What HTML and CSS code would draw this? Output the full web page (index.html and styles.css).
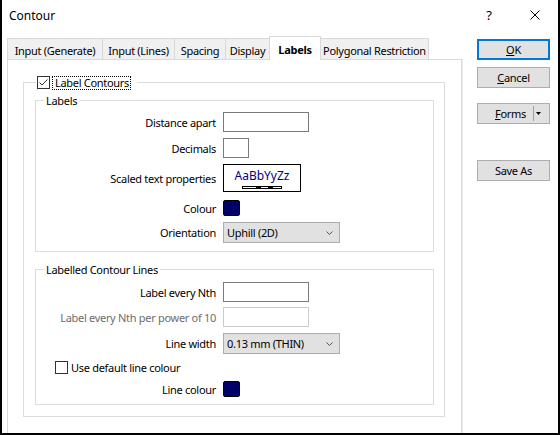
FILE: index.html
```html
<!DOCTYPE html>
<html>
<head>
<meta charset="utf-8">
<link rel="stylesheet" href="styles.css">
</head>
<body>
<div class="window">
  <div class="titlebar">
    <span class="title">Contour</span>
    <span class="capbtn help">?</span>
    <span class="capbtn"><svg width="10" height="10" viewBox="0 0 10 10"><path d="M0.5 0.5L9.5 9.5M9.5 0.5L0.5 9.5" stroke="#000" stroke-width="1" fill="none"/></svg></span>
  </div>
  <div class="main">
    <div class="tabs-area">
      <div class="tabstrip">
        <div class="tab tab-gen">Input (Generate)</div>
        <div class="tab tab-lines">Input (Lines)</div>
        <div class="tab tab-spacing">Spacing</div>
        <div class="tab tab-display">Display</div>
        <div class="tab tab-labels active">Labels</div>
        <div class="tab tab-poly">Polygonal Restriction</div>
      </div>
      <div class="panel">
        <div class="group outer">
          <div class="legend legend-check">
            <span class="checkbox"><svg width="13" height="13" viewBox="0 0 13 13"><rect x="0.5" y="0.5" width="12" height="12" fill="#fff" stroke="#333"/><path d="M2.5 6.5L5 9L10.5 3.5" stroke="#333" stroke-width="1" fill="none"/></svg></span>
            <span class="focus">Label Contours</span>
          </div>
          <div class="group inner inner-labels">
            <div class="legend">Labels</div>
            <div class="row row-a">
              <span class="lbl">Distance apart</span>
              <span class="textbox w-long"></span>
            </div>
            <div class="row row-b">
              <span class="lbl">Decimals</span>
              <span class="textbox w-short"></span>
            </div>
            <div class="row row-c">
              <span class="lbl">Scaled text properties</span>
              <span class="scaled">
                <span class="scaled-text">AaBbYyZz</span>
                <svg class="scalebar" width="40" height="3" viewBox="0 0 40 3"><rect x="0" y="0" width="40" height="3" fill="#000"/><rect x="1" y="1" width="13" height="1" fill="#fff"/><rect x="19" y="1" width="7" height="1" fill="#fff"/><rect x="31" y="1" width="8" height="1" fill="#fff"/></svg>
              </span>
            </div>
            <div class="row row-d">
              <span class="lbl">Colour</span>
              <span class="swatch"></span>
            </div>
            <div class="row row-e">
              <span class="lbl">Orientation</span>
              <span class="select"><span>Uphill (2D)</span><svg width="7" height="4" viewBox="0 0 7 4"><path d="M0.5 0.5L3.5 3.5L6.5 0.5" stroke="#555" fill="none"/></svg></span>
            </div>
          </div>
          <div class="group inner inner-lines">
            <div class="legend">Labelled Contour Lines</div>
            <div class="row row-f">
              <span class="lbl">Label every Nth</span>
              <span class="textbox w-long"></span>
            </div>
            <div class="row row-g">
              <span class="lbl disabled">Label every Nth per power of 10</span>
              <span class="textbox w-long tb-disabled"></span>
            </div>
            <div class="row row-h">
              <span class="lbl">Line width</span>
              <span class="select"><span>0.13 mm (THIN)</span><svg width="7" height="4" viewBox="0 0 7 4"><path d="M0.5 0.5L3.5 3.5L6.5 0.5" stroke="#555" fill="none"/></svg></span>
            </div>
            <div class="check-row">
              <span class="checkbox"><svg width="13" height="13" viewBox="0 0 13 13"><rect x="0.5" y="0.5" width="12" height="12" fill="#fff" stroke="#333"/></svg></span>
              <span>Use default line colour</span>
            </div>
            <div class="row row-i">
              <span class="lbl">Line colour</span>
              <span class="swatch"></span>
            </div>
          </div>
        </div>
      </div>
    </div>
    <div class="buttons">
      <div class="btn btn-ok"><span><u>O</u>K</span></div>
      <div class="btn btn-cancel"><span><u>C</u>ancel</span></div>
      <div class="btn btn-forms">
        <span class="split-main"><u>F</u>orms</span>
        <span class="split-sep"></span>
        <span class="split-arrow"><svg width="5" height="3" viewBox="0 0 5 3"><path d="M0 0H5L2.5 3Z" fill="#000"/></svg></span>
      </div>
      <div class="btn btn-save"><span>Save As</span></div>
    </div>
  </div>
</div>
</body>
</html>
```

FILE: styles.css
```css
* { box-sizing: border-box; }

body {
  margin: 0;
  font-family: "Noto Sans", "Open Sans", sans-serif;
  font-size: 11px;
  letter-spacing: -0.3px;
  color: #000;
  background: #fff;
}

.window {
  width: 560px;
  height: 435px;
  border: 2px solid #000;
  border-top: 0;
  display: flex;
  flex-direction: column;
  background: #fff;
}

.titlebar {
  height: 30px;
  flex: none;
  display: flex;
  align-items: center;
  font-size: 12px;
  letter-spacing: 0;
}

.title {
  flex: 1;
  padding-left: 7px;
  padding-top: 1px;
}

.capbtn {
  width: 46px;
  height: 30px;
  display: flex;
  align-items: center;
  justify-content: center;
}

.help {
  font-size: 13px;
}

.main {
  flex: 1;
  min-height: 0;
  display: flex;
  padding: 6px 0 0 5px;
}

.tabs-area {
  width: 455px;
  display: flex;
  flex-direction: column;
}

.tabstrip {
  height: 23px;
  flex: none;
  display: flex;
  align-items: flex-end;
}

.tab {
  height: 21px;
  border: 1px solid #d9d9d9;
  border-bottom: 0;
  background: #f0f0f0;
  display: flex;
  align-items: center;
  justify-content: center;
  padding-top: 2px;
  margin-left: -1px;
  white-space: nowrap;
}

.tab:first-child { margin-left: 0; }

.tab.active {
  height: 24px;
  margin-bottom: -1px;
  background: #fff;
  font-weight: bold;
  padding-top: 1px;
  position: relative;
  z-index: 1;
}

.tab-gen { width: 96px; }
.tab-lines { width: 73px; }
.tab-spacing { width: 52px; }
.tab-display { width: 45px; }
.tab-labels { width: 52px; }
.tab-poly { width: 109px; }

.panel {
  flex: 1;
  border: 1px solid #d9d9d9;
  border-bottom: 0;
  background: #fff;
  padding: 22px 0 0 15px;
  box-shadow: 1px 0 0 #ececec;
}

.group {
  border: 1px solid #dcdcdc;
}

.legend {
  width: fit-content;
  background: #fff;
  display: flex;
  align-items: center;
  white-space: nowrap;
}

.outer {
  width: 422px;
  padding: 0 0 11px 11px;
}

.legend-check {
  height: 15px;
  margin: -8px 0 0 1px;
  padding: 0 6px 0 1px;
}

.checkbox {
  width: 13px;
  height: 13px;
  display: block;
}

.checkbox svg { display: block; }

.focus {
  margin-left: 2px;
  height: 14px;
  border: 1px dotted #000;
  padding: 0 1px 0 2px;
  display: flex;
  align-items: center;
}

.inner {
  width: 399px;
  margin-top: 10px;
}

.inner-labels { padding-bottom: 8px; }

.inner-lines {
  margin-top: 17px;
  padding-bottom: 7px;
}

.inner > .legend {
  height: 14px;
  margin: -8px 0 0 8px;
  padding: 0 2px;
}

.row {
  display: grid;
  grid-template-columns: 180px auto;
  column-gap: 7px;
  align-items: center;
  justify-items: start;
}

.lbl {
  justify-self: end;
  white-space: nowrap;
}

.lbl.disabled { color: #6d6d6d; }

.row-a { margin-top: 5px; height: 20px; }
.row-b { margin-top: 6px; height: 20px; }
.row-c { margin-top: 6px; height: 28px; }
.row-d { margin-top: 6px; height: 20px; }
.row-e { margin-top: 4px; height: 21px; }

.row-f { margin-top: 6px; height: 20px; }
.row-g { margin-top: 5px; height: 20px; }
.row-h { margin-top: 6px; height: 21px; }
.row-i { margin-top: 7px; height: 16px; }

.textbox {
  display: block;
  height: 20px;
  border: 1px solid #7a7a7a;
  background: #fff;
}

.tb-disabled { border-color: #cccccc; }

.w-long { width: 86px; }
.w-short { width: 26px; }

.scaled {
  width: 78px;
  height: 28px;
  border: 1px solid #000;
  display: flex;
  flex-direction: column;
  align-items: center;
  padding-top: 3px;
}

.scaled-text {
  color: #000080;
  font-size: 12px;
  letter-spacing: 0;
  line-height: 15px;
  height: 15px;
}

.scalebar {
  display: block;
  margin-top: 3px;
  margin-left: -1px;
}

.swatch {
  display: block;
  width: 17px;
  height: 16px;
  background: #000066;
  border: 1px solid #000;
  border-radius: 2px;
}

.select {
  width: 117px;
  height: 21px;
  border: 1px solid #adadad;
  background: #e1e1e1;
  display: flex;
  align-items: center;
  justify-content: space-between;
  padding: 0 6px 0 3px;
}

.select svg { display: block; }

.check-row {
  margin-top: 7px;
  height: 13px;
  display: flex;
  align-items: center;
  padding-left: 19px;
  gap: 3px;
}

.buttons {
  width: 73px;
  margin: 3px 0 0 15px;
  display: flex;
  flex-direction: column;
}

.btn {
  height: 21px;
  border: 1px solid #adadad;
  background: #e1e1e1;
  display: flex;
  align-items: center;
  justify-content: center;
  flex: none;
}

.btn-ok {
  border-color: #0078d7;
  box-shadow: inset 0 0 0 1px #0078d7;
}

.btn-cancel { margin-top: 7px; }
.btn-forms { margin-top: 15px; justify-content: flex-start; }
.btn-save { margin-top: 36px; }

.split-main {
  flex: 1;
  text-align: right;
  padding-right: 7px;
}

.split-sep {
  width: 1px;
  height: 15px;
  background: #a0a0a0;
}

.split-arrow {
  width: 15px;
  display: flex;
  align-items: center;
  padding-left: 2px;
}

.split-arrow svg { display: block; }
```
